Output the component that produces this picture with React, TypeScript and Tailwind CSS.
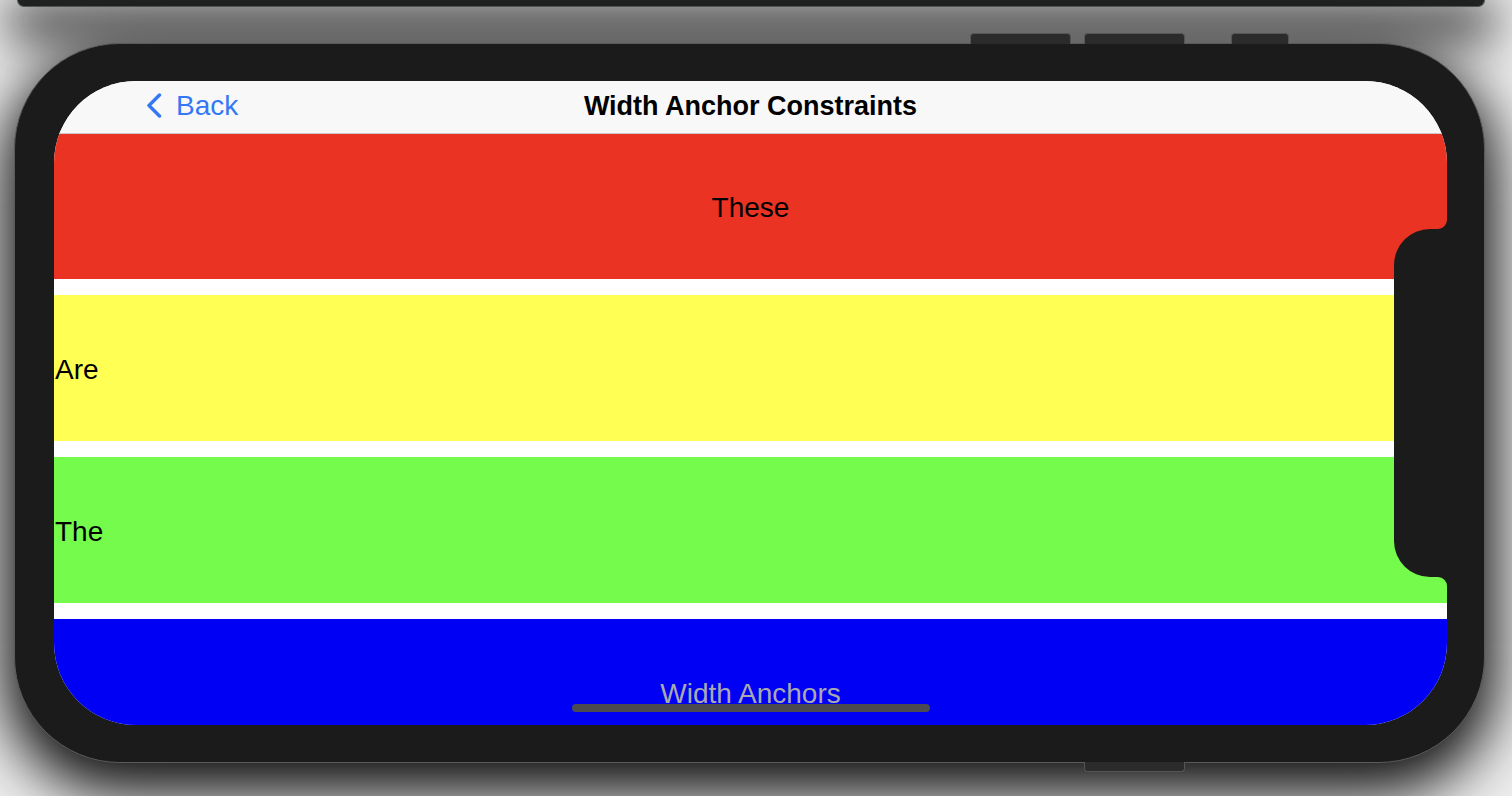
import React from "react";

const font = { fontFamily: '"Liberation Sans", Arial, sans-serif' };

function Notch() {
  return (
    <svg
      className="absolute right-0 top-[139px]"
      width="53"
      height="366"
      viewBox="0 0 53 366"
    >
      <path
        d="M53 0 A9 9 0 0 1 44 9 L36 9 A36 36 0 0 0 0 45 L0 321 A36 36 0 0 0 36 357 L44 357 A9 9 0 0 1 53 366 Z"
        fill="#1b1b1b"
      />
    </svg>
  );
}

function Row({
  color,
  label,
  align,
  textClass = "text-black",
}: {
  color: string;
  label: string;
  align: "center" | "left";
  textClass?: string;
}) {
  return (
    <div
      className={`h-[146px] shrink-0 flex items-center ${
        align === "center" ? "justify-center" : "justify-start pl-px"
      } ${color}`}
    >
      <span className={`text-[28px] leading-none mt-[3px] ${textClass}`}>{label}</span>
    </div>
  );
}

export default function App() {
  return (
    <div
      className="w-[1512px] h-[796px] overflow-hidden bg-[#eeeeee] flex flex-col"
      style={font}
    >
      {/* previous device bottom edge */}
      <div className="ml-[17px] w-[1468px] h-[7px] shrink-0 bg-[#202222] rounded-b-[14px] border-b border-x border-[#555] shadow-[0_18px_50px_12px_rgba(0,0,0,0.95)]" />

      {/* device */}
      <div className="relative mt-[36px] ml-[14px] w-[1471px] h-[720px] shrink-0 rounded-[106px] bg-[#1b1b1b] border border-[#5a5a5a] pt-[37px] pl-[39px] shadow-[0_20px_60px_10px_rgba(0,0,0,0.95)]">
        {/* hardware buttons */}
        <div className="absolute top-[-11px] left-[955px] w-[101px] h-[11px] rounded-t-[4px] bg-[#2b2b2b] border border-b-0 border-[#555]" />
        <div className="absolute top-[-11px] left-[1069px] w-[101px] h-[11px] rounded-t-[4px] bg-[#2b2b2b] border border-b-0 border-[#555]" />
        <div className="absolute top-[-11px] left-[1216px] w-[58px] h-[11px] rounded-t-[4px] bg-[#2b2b2b] border border-b-0 border-[#555]" />
        <div className="absolute bottom-[-10px] left-[1069px] w-[101px] h-[10px] rounded-b-[4px] bg-[#2b2b2b] border border-t-0 border-[#555]" />

        {/* screen */}
        <div className="relative w-[1393px] h-[644px] rounded-[82px] overflow-hidden bg-white flex flex-col">
          {/* nav bar */}
          <div className="relative h-[53px] shrink-0 bg-[#f8f8f8] border-b border-[#c9c9c9] flex items-center justify-center">
            <div className="absolute left-[92px] top-0 h-full flex items-center gap-[14px] text-[#3478f6]">
              <svg width="16" height="26" viewBox="0 0 16 26" className="mt-[-2px]">
                <path
                  d="M13.5 2 L3 12.5 L13.5 23"
                  fill="none"
                  stroke="#3478f6"
                  strokeWidth="3.4"
                  strokeLinecap="round"
                  strokeLinejoin="round"
                />
              </svg>
              <span className="text-[28px] leading-none mt-[-2px]">Back</span>
            </div>
            <span className="text-[27px] font-bold leading-none text-black mt-[-2px]">
              Width Anchor Constraints
            </span>
          </div>

          {/* rows */}
          <div className="flex flex-col gap-[16px]">
            <div className="h-[145px] shrink-0 flex items-center justify-center bg-[#ea3323]">
              <span className="text-[28px] leading-none mt-[2px] text-black">These</span>
            </div>
            <Row color="bg-[#ffff54]" label="Are" align="left" />
            <Row color="bg-[#75fb4c]" label="The" align="left" />
            <Row
              color="bg-[#0000f5]"
              label="Width Anchors"
              align="center"
              textClass="text-[#a9a9ae]"
            />
          </div>

          <Notch />

          {/* home indicator */}
          <div className="absolute left-[518px] top-[623px] w-[358px] h-[8px] rounded-full bg-[#4b4b4f]" />
        </div>
      </div>
    </div>
  );
}
